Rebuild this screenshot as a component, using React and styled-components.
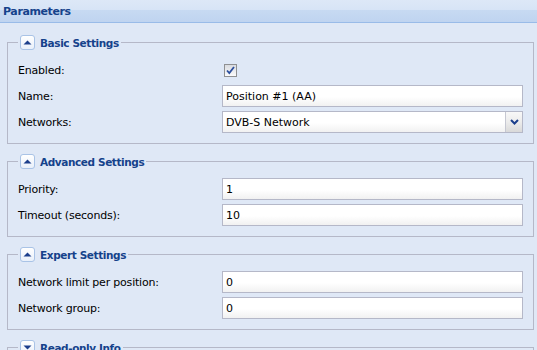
import React from 'react'
import styled, { createGlobalStyle } from 'styled-components'

const GlobalStyle = createGlobalStyle`
  html, body {
    margin: 0;
    padding: 0;
    overflow: hidden;
    background: #dfe8f6;
  }
  * {
    box-sizing: border-box;
  }
`

const font = `"DejaVu Sans", Tahoma, Verdana, sans-serif`

const Panel = styled.div`
  width: 537px;
  height: 350px;
  overflow: hidden;
  font-family: ${font};
`

const Header = styled.div`
  height: 23px;
  padding: 0 3px;
  display: flex;
  align-items: center;
  border-bottom: 1px solid #99bbe8;
  background: linear-gradient(to bottom, #dde8f7 0%, #d7e4f6 45%, #c7daf2 46%, #bfd4f0 100%);
  color: #15428b;
  font-size: 11px;
  font-weight: bold;
  letter-spacing: -0.4px;
`

const Body = styled.div`
  padding: 12px 3px 0 7px;
`

const FieldSet = styled.fieldset`
  margin: 0 0 10px;
  padding: 9px 10px 10px;
  border: 1px solid #b5b8c8;
  min-inline-size: 0;
`

const Legend = styled.legend`
  display: flex;
  align-items: center;
  gap: 5px;
  height: 15px;
  padding: 0 2px;
  color: #15428b;
  font-size: 10.5px;
  font-weight: bold;
  letter-spacing: -0.4px;
`

const ToggleTool = styled.span`
  display: flex;
  align-items: center;
  justify-content: center;
  width: 15px;
  height: 15px;
  border: 1px solid #a9c3e6;
  border-radius: 3px;
  background: linear-gradient(to bottom, #ffffff, #e9f0fa);
`

const Rows = styled.div`
  display: flex;
  flex-direction: column;
  gap: 4px;
`

const Row = styled.div`
  display: flex;
  align-items: center;
  height: 22px;
`

const Label = styled.label`
  width: 204px;
  flex: none;
  font-size: 11px;
  color: #000;
  letter-spacing: -0.2px;
`

const TextField = styled.input`
  flex: 1;
  min-width: 0;
  height: 22px;
  margin: 0;
  padding: 1px 3px;
  border: 1px solid #b5b8c8;
  border-radius: 0;
  background: linear-gradient(to bottom, #ffffff 0%, #ffffff 55%, #f1f1f1 100%);
  font-family: ${font};
  font-size: 11px;
  color: #000;
  outline: none;
`

const Combo = styled.div`
  flex: 1;
  display: flex;
  height: 22px;
  border: 1px solid #b5b8c8;
  background: linear-gradient(to bottom, #ffffff 0%, #ffffff 55%, #f1f1f1 100%);
`

const ComboText = styled.span`
  flex: 1;
  display: flex;
  align-items: center;
  padding: 0 3px;
  font-size: 11px;
  color: #000;
`

const Trigger = styled.span`
  width: 17px;
  flex: none;
  display: flex;
  align-items: center;
  justify-content: center;
  border-left: 1px solid #c6c8d2;
  background: linear-gradient(to bottom, #f8f8f8 0%, #ececec 50%, #d9d9d9 100%);
`

const CheckBox = styled.span`
  display: flex;
  align-items: center;
  justify-content: center;
  width: 13px;
  height: 13px;
  margin-left: 2px;
  border: 1px solid #8f9092;
  background: linear-gradient(to bottom, #d9dbe0, #fbfbfb);
`

const Arrow = ({ down }) => (
  <svg width="9" height="5" viewBox="0 0 9 5">
    <path d={down ? 'M0.5 0.5 H8.5 L4.5 4.5 Z' : 'M4.5 0.5 L8.5 4.5 H0.5 Z'} fill="#1c3f8c" />
  </svg>
)

const Section = ({ title, collapsed, children }) => (
  <FieldSet>
    <Legend>
      <ToggleTool>
        <Arrow down={collapsed} />
      </ToggleTool>
      {title}
    </Legend>
    {!collapsed && <Rows>{children}</Rows>}
  </FieldSet>
)

const TextRow = ({ label, value }) => (
  <Row>
    <Label>{label}</Label>
    <TextField defaultValue={value} />
  </Row>
)

export default function App() {
  return (
    <Panel>
      <GlobalStyle />
      <Header>Parameters</Header>
      <Body>
        <Section title="Basic Settings">
          <Row>
            <Label>Enabled:</Label>
            <CheckBox>
              <svg width="11" height="11" viewBox="0 0 11 11">
                <path d="M2 5.5 L4.3 8 L9 2" stroke="#2c4f9e" strokeWidth="1.8" fill="none" />
              </svg>
            </CheckBox>
          </Row>
          <TextRow label="Name:" value="Position #1 (AA)" />
          <Row>
            <Label>Networks:</Label>
            <Combo>
              <ComboText>DVB-S Network</ComboText>
              <Trigger>
                <svg width="9" height="6" viewBox="0 0 9 6">
                  <path d="M1 1 L4.5 4.5 L8 1" stroke="#1c3f8c" strokeWidth="2" fill="none" />
                </svg>
              </Trigger>
            </Combo>
          </Row>
        </Section>
        <Section title="Advanced Settings">
          <TextRow label="Priority:" value="1" />
          <TextRow label="Timeout (seconds):" value="10" />
        </Section>
        <Section title="Expert Settings">
          <TextRow label="Network limit per position:" value="0" />
          <TextRow label="Network group:" value="0" />
        </Section>
        <Section title="Read-only Info" collapsed />
      </Body>
    </Panel>
  )
}
